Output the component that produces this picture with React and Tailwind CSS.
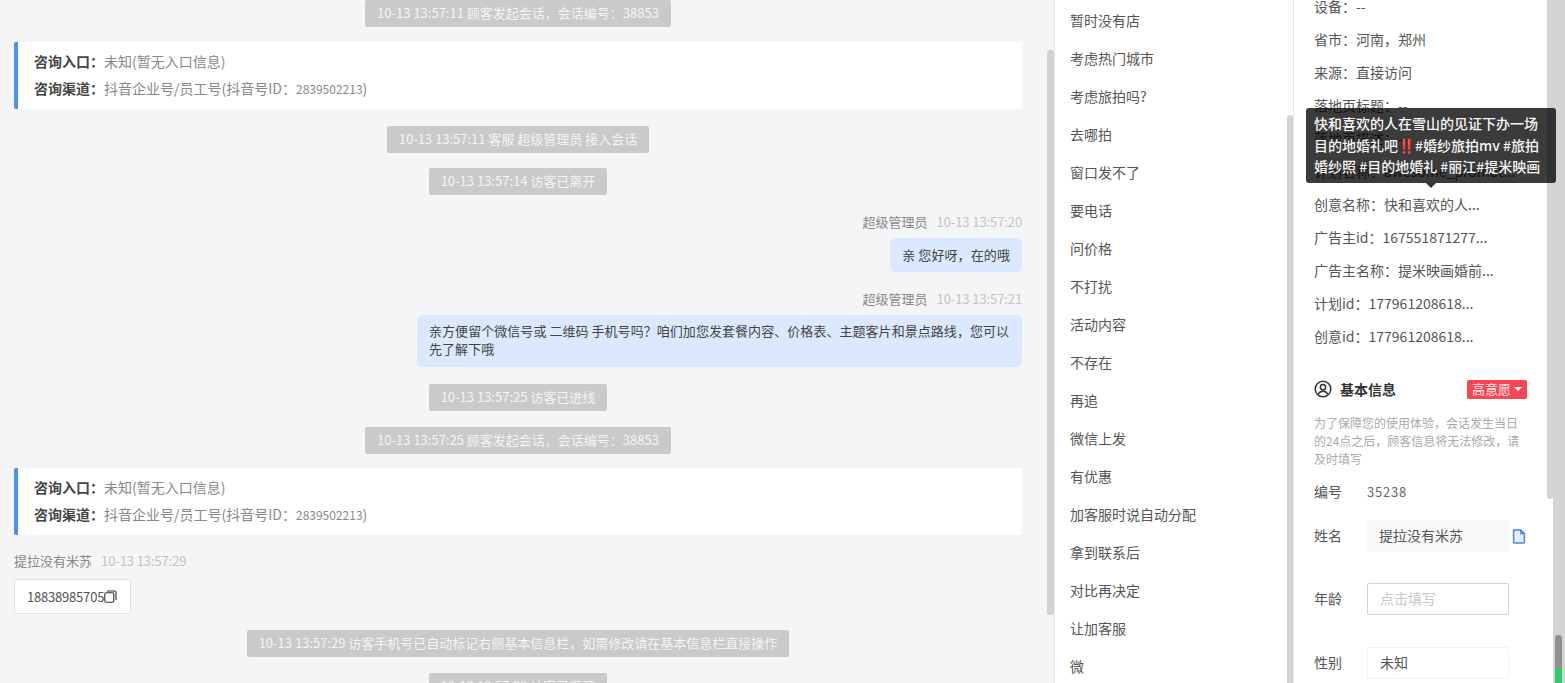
const font = { fontFamily: '"Noto Sans CJK SC", "Liberation Sans", sans-serif' };

const quickReplies = [
  "暂时没有店", "考虑热门城市", "考虑旅拍吗?", "去哪拍", "窗口发不了", "要电话", "问价格", "不打扰", "活动内容",
  "不存在", "再追", "微信上发", "有优惠", "加客服时说自动分配", "拿到联系后", "对比再决定", "让加客服", "微",
];

const infoRows = [
  "设备：--", "省市：河南，郑州", "来源：直接访问", "落地页标题：--", "落地页描述：--", "计划名称：awesome_promot...",
  "创意名称：快和喜欢的人...", "广告主id：167551871277...", "广告主名称：提米映画婚前...", "计划id：177961208618...", "创意id：177961208618...",
];

const Pill = ({ children, className = "" }) => (
  <div className={`flex justify-center ${className}`}>
    <span className="h-[27px] px-3 rounded-[2px] bg-[#c9cacc] text-[#f4f4f4] text-[13px] leading-[26px] whitespace-nowrap">{children}</span>
  </div>
);

const EntryCard = ({ className = "" }) => (
  <div className={`h-[67px] bg-white border-l-4 border-[#4d90f8] rounded-l-[2px] pl-4 pt-[6px] text-[14px] leading-[27px] ${className}`}>
    <div><span className="font-bold text-[#444]">咨询入口：</span><span className="text-[#888]">未知(暂无入口信息)</span></div>
    <div>
      <span className="font-bold text-[#444]">咨询渠道：</span>
      <span className="text-[#888]">抖音企业号/员工号(抖音号ID：<span className="text-[12px]">2839502213</span>)</span>
    </div>
  </div>
);

const Meta = ({ name, time, className = "" }) => (
  <div className={`h-5 flex items-center gap-[9px] text-[13px] leading-5 ${className}`}>
    <span className="text-[#888]">{name}</span>
    <span className="text-[#c4c4c4] tracking-[-0.1px]">{time}</span>
  </div>
);

const Field = ({ label, className = "", children }) => (
  <div className={`flex items-center text-[14px] ${className}`}>
    <span className="w-[53px] mb-[2px] text-[#555]">{label}</span>
    {children}
  </div>
);

export default function App() {
  return (
    <div style={font} className="relative h-[683px] w-[1565px] flex overflow-hidden bg-white">
      {/* Chat */}
      <div className="w-[1047px] shrink-0 bg-[#f4f5f7] pl-[14px] pr-[25px]">
        <Pill>10-13 13:57:11 顾客发起会话，会话编号：38853</Pill>
        <EntryCard className="mt-[15px]" />
        <Pill className="mt-[17px]">10-13 13:57:11 客服 超级管理员 接入会话</Pill>
        <Pill className="mt-[15px]">10-13 13:57:14 访客已离开</Pill>
        <Meta name="超级管理员" time="10-13 13:57:20" className="justify-end mt-[17px]" />
        <div className="flex justify-end mt-[6px]">
          <div className="h-[34px] px-3 rounded-[5px] bg-[#dbe8fd] text-[13px] leading-[34px] tracking-[0.1px] text-[#444]">亲 您好呀，在的哦</div>
        </div>
        <Meta name="超级管理员" time="10-13 13:57:21" className="justify-end mt-[17px]" />
        <div className="flex justify-end mt-[6px]">
          <div className="w-[605px] h-[52px] px-3 py-[7px] rounded-[5px] bg-[#dbe8fd] text-[13px] leading-[18px] tracking-[0.05px] text-[#444]">
            亲方便留个微信号或 二维码 手机号吗？咱们加您发套餐内容、价格表、主题客片和景点路线，您可以先了解下哦
          </div>
        </div>
        <Pill className="mt-[17px]">10-13 13:57:25 访客已进线</Pill>
        <Pill className="mt-[16px]">10-13 13:57:25 顾客发起会话，会话编号：38853</Pill>
        <EntryCard className="mt-[14px]" />
        <Meta name="提拉没有米苏" time="10-13 13:57:29" className="mt-[16px]" />
        <div className="mt-[8px] w-[117px] h-[35px] flex items-center pl-[12px] bg-white border border-[#e2e2e2] rounded-[3px] text-[13px] tracking-[-0.2px] text-[#555]">
          18838985705
          <svg width="13" height="13" viewBox="0 0 13 13" fill="none" stroke="#333" strokeWidth="1.1" className="shrink-0">
            <rect x="0.8" y="2.8" width="9" height="9.4" rx="1.2" />
            <path d="M3 1h7.800c.7 0 1.200.5 1.200 1.200V10" />
          </svg>
        </div>
        <Pill className="mt-[16px]">10-13 13:57:29 访客手机号已自动标记右侧基本信息栏，如需修改请在基本信息栏直接操作</Pill>
        <Pill className="mt-[16px]">10-13 13:57:29 访客已离开</Pill>
      </div>

      {/* Chat scrollbar */}
      <div className="w-[7px] shrink-0 bg-[#f4f5f7] pt-[50px]">
        <div className="h-[565px] rounded-[3px] bg-[#d2d2d2]" />
      </div>

      {/* Quick replies */}
      <div className="w-[240px] shrink-0 flex border-l border-r border-[#e8e8e8]">
        <div className="flex-1 pl-[15px] text-[14px] text-[#555]">
          {quickReplies.map((t) => (
            <div key={t} className="h-[38px] leading-[40px] whitespace-nowrap">{t}</div>
          ))}
        </div>
        <div className="w-[6px] shrink-0 pt-[115px]">
          <div className="h-[568px] rounded-t-[3px] bg-[#d4d4d4]" />
        </div>
      </div>

      {/* Customer info */}
      <div className="w-[253px] shrink-0 pl-5 pr-5 -mt-[10px]">
        {infoRows.map((t) => (
          <div key={t} className="h-[33px] leading-[33px] text-[14px] text-[#555] whitespace-nowrap">{t}</div>
        ))}
        <div className="mt-[26px] h-5 flex items-center">
          <svg width="18" height="18" viewBox="0 0 18 18" fill="none" stroke="#333" strokeWidth="1.5">
            <circle cx="9" cy="9" r="7.800" />
            <circle cx="9" cy="7.200" r="2.600" />
            <path d="M4.200 14.200c1-2 2.800-3 4.800-3s3.800 1 4.800 3" />
          </svg>
          <span className="ml-2 text-[14px] font-bold text-[#333]">基本信息</span>
          <span className="ml-auto w-[60px] h-[19px] flex items-center justify-center gap-[3px] rounded-[2px] bg-[#f84657] text-[13px] text-[#fbeaea]">
            高意愿
            <span className="w-0 h-0 border-x-[4px] border-x-transparent border-t-[4px] border-t-white" />
          </span>
        </div>
        <p className="mt-[15px] text-[12px] leading-[18px] text-[#aaa]">为了保障您的使用体验，会话发生当日的24点之后，顾客信息将无法修改，请及时填写</p>
        <Field label="编号" className="mt-[14px] h-5">
          <span className="text-[#666] text-[13px] tracking-[0.8px]">35238</span>
        </Field>
        <Field label="姓名" className="mt-[18px]">
          <div className="w-[142px] h-[32px] leading-[30px] px-3 rounded-[2px] bg-[#f9f9f9] text-[14px] text-[#555]">提拉没有米苏</div>
          <svg width="14" height="15" viewBox="0 0 14 15" fill="none" stroke="#4d84e8" strokeWidth="1.5" className="ml-[3px] shrink-0">
            <path d="M1.600 1h7.200l3.600 3.600v8.400c0 .6-.4 1-1 1H2.600c-.6 0-1-.4-1-1z" fill="#e6eefc" />
            <path d="M8.800 1v3.600h3.600" />
          </svg>
        </Field>
        <Field label="年龄" className="mt-[31px]">
          <div className="w-[142px] h-[32px] leading-[28px] px-3 rounded-[2px] border border-[#d4d4d4] text-[14px] text-[#c8c8c8]">点击填写</div>
        </Field>
        <Field label="性别" className="mt-[32px]">
          <div className="w-[142px] h-[32px] leading-[28px] px-3 rounded-[2px] border border-[#f3f3f3] text-[14px] text-[#555]">未知</div>
        </Field>
      </div>

      {/* Info panel scrollbar */}
      <div className="w-[6px] shrink-0">
        <div className="h-[499px] rounded-b-[2px] bg-[#d4d4d4]" />
      </div>

      {/* Outer scrollbar */}
      <div className="w-[12px] shrink-0 bg-[#d4d4d4] pt-[635px] pl-[2px] pr-[3px]">
        <div className="h-[33px] rounded-t-[3px] bg-[#8f8f8f]" />
        <div className="h-[15px] bg-[#2ecb6b]" />
      </div>

      {/* Tooltip */}
      <div className="absolute left-[1306px] top-[108px] w-[250px] h-[75px] pl-2 pt-[5px] rounded-[3px] bg-[#000000c4] text-[14px] leading-[21.500px] font-medium text-[#f5f5f5] whitespace-nowrap">
        <div>快和喜欢的人在雪山的见证下办一场</div>
        <div>目的地婚礼吧<span className="text-[#d93025] font-bold">‼️</span>#婚纱旅拍mv #旅拍</div>
        <div>婚纱照 #目的地婚礼 #丽江#提米映画</div>
        <span className="absolute left-[120px] -bottom-[5px] w-0 h-0 border-x-[5px] border-x-transparent border-t-[5px] border-t-[#333]" />
      </div>
    </div>
  );
}
